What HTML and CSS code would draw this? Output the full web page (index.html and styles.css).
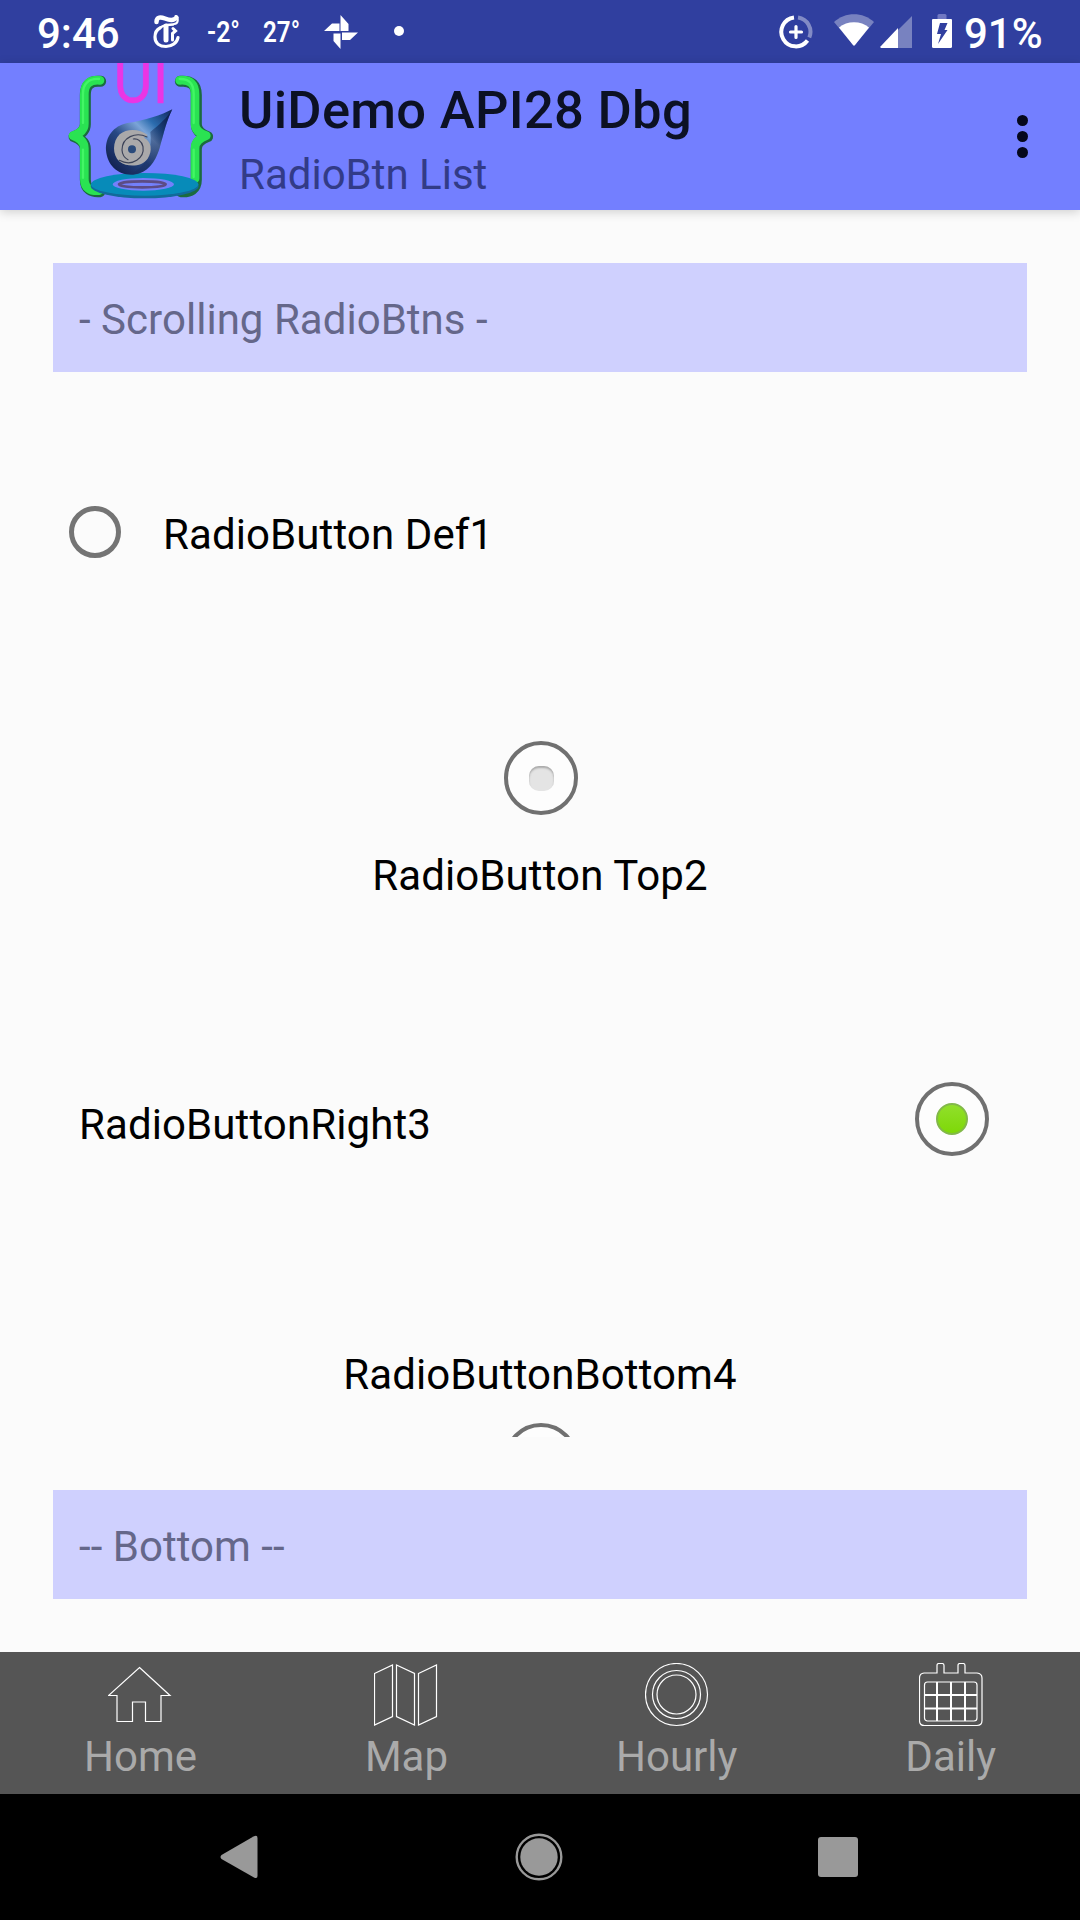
FILE: index.html
```html
<!DOCTYPE html>
<html lang="en">
<head>
<meta charset="utf-8">
<title>UiDemo API28 Dbg</title>
<link rel="stylesheet" href="styles.css">
</head>
<body>
<div class="screen">
  <div class="status">
    <span class="clock">9:46</span>
    <svg class="s-news" width="28" height="36" viewBox="0 0 28 36" fill="none" stroke="#fff" stroke-linecap="round">
      <path d="M3.500 8C3.500 2.500 8 3 12 4.500S21 7 23.500 3.500" stroke-width="4.500"/>
      <path d="M22.500 2C26 4 25.500 10 21 10" stroke-width="2"/>
      <path d="M7 14C3 16 2 19 2 23C2 29.500 7 32.500 13 32.500C19 32.500 24 29 25 23.500" stroke-width="3.200"/>
      <path d="M7.500 13.500C11 10.500 15 11 20 10.500" stroke-width="2.400"/>
      <path d="M13 12V26" stroke-width="5"/>
      <path d="M20 14.500L22.500 17L19.500 19.500V26" stroke-width="3"/>
    </svg>
    <svg class="s-low" width="36" height="36" viewBox="0 -7 36 36"><text class="temp" x="0" y="22" textLength="33" lengthAdjust="spacingAndGlyphs">-2°</text></svg>
    <svg class="s-high" width="40" height="36" viewBox="0 -7 40 36"><text class="temp" x="0" y="22" textLength="37" lengthAdjust="spacingAndGlyphs">27°</text></svg>
    <svg class="s-wheel" width="34" height="34" viewBox="0 0 34 34" fill="#fff">
      <path d="M16.500 0L24.500 9V16H16.500zM34 17.500L26 25H18V17.500zM16.500 34L9.500 26V18.500H16.500zM0 16L8 8.500H15.500V16z"/>
    </svg>
    <i class="s-dot"></i>
    <svg class="s-data" width="34" height="34" viewBox="0 0 34 34" fill="none" stroke="#fff" stroke-width="4">
      <path d="M15 2.500A14.500 14.500 0 1 0 28.500 25.500"/><path d="M19 2.500A14.500 14.500 0 0 1 30.300 22.500" opacity=".4"/>
      <path d="M17 11.500V22.500M11.500 17H22.500" stroke-width="3.200" stroke-linecap="round"/>
    </svg>
    <svg class="s-wifi" width="40" height="33" viewBox="0 0 40 33" fill="#fff">
      <path opacity=".35" d="M0 8C11-2.500 29-2.500 40 8L20 32z"/><path d="M5 13.500C13 6.500 27 6.500 35 13.500L21 31Q20 32 19 31z"/>
    </svg>
    <svg class="s-cell" width="32" height="32" viewBox="0 0 32 32" fill="#fff">
      <path opacity=".35" d="M18 14L32 0V32H18z"/><path d="M18 12V32H1Q0 31.500 .5 30.500z"/>
    </svg>
    <svg class="s-batt" width="20" height="34" viewBox="0 0 20 34">
      <path fill="#7078c2" d="M5.500 5V1.500Q5.500 0 7 0H13Q14.500 0 14.500 1.500V5z"/><path fill="#fff" d="M1 5H19Q20 5 20 6V32.500Q20 34 18.500 34H1.500Q0 34 0 32.500V6Q0 5 1 5z"/>
      <path fill="#303f9f" d="M8 9H15.500L12.500 16H15.500L6 30L9 20H5z"/>
    </svg>
    <span class="level">91%</span>
  </div>

  <header class="appbar">
    <svg class="logo" width="180" height="147" viewBox="0 24 540 441">
      <defs>
        <linearGradient id="drop" x1="0" y1="1" x2="1" y2="0"><stop offset="0" stop-color="#0b1440"/><stop offset=".4" stop-color="#274884"/><stop offset=".62" stop-color="#7ba4d8"/><stop offset=".75" stop-color="#2b6cae"/><stop offset="1" stop-color="#10235c"/></linearGradient>
        <linearGradient id="shade" x1="0" y1="0" x2="1" y2="0"><stop offset="0" stop-color="#08123c" stop-opacity="0"/><stop offset="1" stop-color="#08123c" stop-opacity=".7"/></linearGradient>
      </defs>
      <text class="logo-text" x="190" y="143" textLength="164" lengthAdjust="spacingAndGlyphs">UI</text>
      <g fill="none" stroke-linecap="round" stroke-linejoin="round">
        <g stroke="#1b6b3f" stroke-width="33"><path d="M152 79C120 76 106 91 106 120V208Q106 233 72 245Q106 257 106 282V374C106 402 124 412 150 410"/><path d="M391 79C425 76 439 91 439 120V208Q439 233 473 245Q439 257 439 282V374C439 402 421 412 393 410"/></g>
        <g stroke="#2ae352" stroke-width="26"><path d="M150 76C118 73 103 88 103 118V206Q103 231 69 242Q103 254 103 280V371C103 399 121 409 147 407"/><path d="M389 76C421 73 435 88 435 118V206Q435 231 469 242Q435 254 435 280V371"/></g>
        <g stroke="#4dff6e" stroke-width="7" opacity=".7"><path d="M147 72C116 70 99 86 99 116V204M99 284V368"/><path d="M389 72C418 71 431 86 431 116V204M431 284V366"/></g>
      </g>
      <ellipse cx="284" cy="393" rx="162" ry="37" fill="#126a9a"/>
      <ellipse cx="284" cy="388" rx="161" ry="34" fill="#078bb9"/>
      <ellipse cx="280" cy="388" rx="92" ry="19" fill="#7380fb"/>
      <ellipse cx="277" cy="388" rx="70" ry="9" fill="none" stroke="#5c4c86" stroke-width="8"/>
      <path d="M367 163C335 180 285 197 232 204C190 213 166 245 168 286C172 333 205 362 250 359C292 355 316 323 329 279C341 236 350 196 367 163z" fill="url(#drop)"/>
      <path d="M367 163C353 187 326 211 301 231C307 290 292 331 240 358C288 361 315 324 329 279C341 236 350 196 367 163z" fill="url(#shade)"/>
      <path d="M293 240C270 221 231 219 209 238C187 259 186 301 209 320C234 338 276 335 293 311C309 286 304 259 282 248z" fill="#aaa9aa"/>
      <g fill="none" stroke="#3d4358" stroke-width="3.500" stroke-linecap="round"><path d="M291 246C257 229 216 247 216 285C217 301 224 309 234 314"/><path d="M208 316C248 337 284 308 279 275C276 258 262 250 250 252"/></g>
      <circle cx="246" cy="283" r="12" fill="#2b4b7b"/>
    </svg>
    <div class="titles">
      <h1>UiDemo API28 Dbg</h1>
      <p>RadioBtn List</p>
    </div>
    <div class="more"><i></i><i></i><i></i></div>
  </header>

  <main class="content">
    <div class="banner">- Scrolling RadioBtns -</div>
    <div class="list">
      <label class="radio def"><span class="ring"></span><span>RadioButton Def1</span></label>
      <label class="radio top"><span class="disc off"></span><span>RadioButton Top2</span></label>
      <label class="radio right"><span>RadioButtonRight3</span><span class="disc on"></span></label>
      <label class="radio bottom"><span>RadioButtonBottom4</span><span class="disc off"></span></label>
    </div>
    <div class="banner">-- Bottom --</div>
  </main>

  <nav class="tabs">
    <div class="tab"><svg width="64" height="64" viewBox="0 0 64 64"><path d="M31.500 4.500L62 32.500H53V58.500H37.500V39H24.500V58.500H9V32.500H.5z"/></svg><span>Home</span></div>
    <div class="tab"><svg width="64" height="64" viewBox="0 0 64 64"><path d="M.5 10.500L18.500 2V53.500L.5 62zM22.500 2L40.500 10.500V62L22.500 53.500zM44.500 10.500L62.500 2V53.500L44.500 62z"/></svg><span>Map</span></div>
    <div class="tab"><svg width="64" height="64" viewBox="0 0 64 64"><circle cx="31.500" cy="31.500" r="31"/><circle cx="31.500" cy="31.500" r="24"/><circle cx="31.500" cy="31.500" r="19.500"/></svg><span>Hourly</span></div>
    <div class="tab"><svg width="64" height="64" viewBox="0 0 64 64"><path d="M5 10H18V2.500Q18 .5 20 .5H23Q25 .5 25 2.500V10H39V2.500Q39 .5 41 .5H44Q46 .5 46 2.500V10H58Q63 10.500 63 15V57.500Q63 62.500 58 62.500H5.500Q.5 62.500 .5 57.500V15Q.5 10.500 5 10z"/><rect x="5.500" y="19" width="52.500" height="39" rx="3"/><path stroke-width="2" d="M18 19V58M32 19V58M46 19V58M5 32H58M5 45.500H58"/></svg><span>Daily</span></div>
  </nav>

  <div class="sysnav">
    <svg width="38" height="44" viewBox="0 0 38 44" fill="#999"><path d="M33.500 1.500Q37.500-.5 37.500 3V41Q37.500 44 34 42.500L1.500 24Q-.5 22 1.500 20z"/></svg>
    <svg class="home" width="48" height="48" viewBox="0 0 48 48"><circle cx="24" cy="24" r="22.300" fill="none" stroke="#999" stroke-width="2.400"/><circle cx="24" cy="24" r="18.700" fill="#999"/></svg>
    <i class="recent"></i>
  </div>
</div>
</body>
</html>
```
FILE: styles.css
```css
* { box-sizing: border-box; }
body { margin: 0; font-family: Roboto, sans-serif; background: #fbfbfb; }
h1, p { margin: 0; }
.screen { width: 1080px; height: 1920px; display: flex; flex-direction: column; overflow: hidden; }

.status { height: 63px; flex: none; background: #303f9f; color: #fff; display: flex; align-items: flex-start; padding-left: 37px; font-size: 42px; font-weight: 500; line-height: 49px; }
.status svg { flex: none; }
.clock { margin-top: 9px; width: 116px; }
.level { margin: 9px 0 0 12px; }
.temp { font: 600 29px Roboto, sans-serif; fill: #fff; }
.s-news { margin-top: 14px; }
.s-low { margin: 13px 0 0 26px; }
.s-high { margin: 13px 0 0 20px; }
.s-wheel { margin: 15px 0 0 21px; }
.s-dot { width: 10px; height: 10px; border-radius: 50%; background: #fff; margin: 26px 0 0 36px; }
.s-data { margin: 15px 0 0 375px; }
.s-wifi { margin: 14px 0 0 21px; }
.s-cell { margin: 16px 0 0 6px; }
.s-batt { margin: 14px 0 0 20px; }

.appbar { height: 147px; flex: none; background: #737fff; display: flex; padding-left: 50px; box-shadow: 0 2px 10px rgba(0, 0, 0, .18); position: relative; }
.logo { flex: none; }
.logo-text { font: 400 180px Lato, sans-serif; fill: #ea35e4; stroke: #ea35e4; stroke-width: 2; }
.titles { margin-left: 9px; flex: 1; padding-top: 16px; }
.titles h1 { font-size: 52.5px; font-weight: 500; line-height: 62px; letter-spacing: .3px; color: #0c1124; }
.titles p { font-size: 42px; line-height: 49px; color: #323b87; margin-top: 9px; }
.more { width: 11px; margin: 52px 52px 0 0; display: flex; flex-direction: column; gap: 5px; }
.more i { width: 11px; height: 11px; border-radius: 50%; background: #05081c; }

.content { flex: 1; padding: 53px 53px 0; }
.banner { height: 109px; padding: 32px 26px 0; background: #cfd0fe; color: #65678a; font-size: 42px; line-height: 49px; letter-spacing: .03px; }
.list { height: 1012px; margin: 53px 0; overflow: hidden; font-size: 42px; line-height: 49px; letter-spacing: .1px; color: #000; }
.radio { display: flex; }
.def { padding: 81px 0 0 16px; height: 316px; align-items: flex-start; }
.ring { width: 52px; height: 52px; border: 5px solid #747474; border-radius: 50%; margin-right: 42px; }
.def span:last-child { margin-top: 4px; }
.disc { width: 74px; height: 74px; border: 4px solid #707070; border-radius: 50%; display: flex; align-items: center; justify-content: center; background: #fdfdfd; flex: none; }
.disc::before { content: ""; border-radius: 50%; width: 25px; height: 25px; }
.off::before { background: #e4e4e4; box-shadow: inset 0 2px 2px #aaa; border-radius: 10px; }
.on::before { width: 28px; height: 28px; background: linear-gradient(#91df2b, #7ed808); border: 2px solid #82b84a; }
.top { height: 341px; flex-direction: column; align-items: center; gap: 36px; }
.top .disc, .bottom .disc { margin-left: 2px; }
.right { height: 268px; padding: 0 38px 0 26px; justify-content: space-between; align-items: flex-start; }
.right span:first-child { margin-top: 18px; }
.bottom { flex-direction: column; align-items: center; gap: 24px; }

.tabs { height: 142px; flex: none; background: #555; display: flex; justify-content: space-around; padding-top: 11px; }
.tab { display: flex; flex-direction: column; align-items: center; font-size: 42px; line-height: 49px; color: #aaa; gap: 5px; }
.tab svg { fill: none; stroke: #fff; stroke-width: 1.2; }

.sysnav { height: 126px; flex: none; background: #000; display: flex; justify-content: space-between; align-items: center; padding: 0 222px 0 220px; }
.home { margin-left: 2px; }
.recent { width: 40px; height: 40px; border-radius: 3px; background: #999; }
```
